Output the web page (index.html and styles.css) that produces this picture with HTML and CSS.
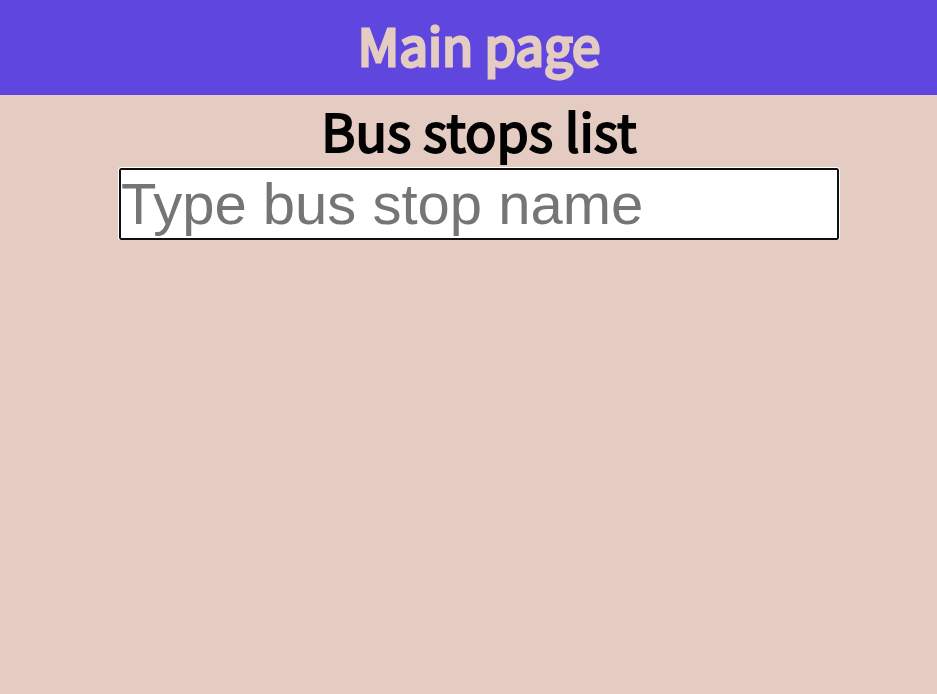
FILE: index.html
```html
<!DOCTYPE html>
<html lang="en">
<head>
<meta charset="utf-8">
<title>Main page</title>
<link rel="stylesheet" href="styles.css">
</head>
<body>
<header class="header"><h1 class="title">Main page</h1></header>
<main class="content">
<h2 class="subtitle"><label for="stop">Bus stops list</label></h2>
<input class="search" id="stop" type="text" placeholder="Type bus stop name">
</main>
</body>
</html>
```
FILE: styles.css
```css
body {
  margin: 0;
  background: #e5ccc3;
  color: #020202;
  font-family: "Noto Sans CJK SC", sans-serif;
}

.header {
  padding: 10px 0 16px 21px;
  background: #5f46df;
  color: #e5ccc3;
  text-align: center;
}

.title,
.subtitle {
  margin: 0;
  font-size: 51px;
  font-weight: 400;
  line-height: 69px;
  -webkit-text-stroke: 3px currentColor;
}

.subtitle {
  font-size: 52px;
  -webkit-text-stroke-width: 2px;
}

.content {
  display: flex;
  flex-direction: column;
  align-items: center;
  gap: 4px;
  padding-left: 21px;
}

.search {
  box-sizing: border-box;
  width: 100%;
  max-width: 720px;
  height: 72px;
  padding: 0 0 2px;
  border: 2px solid #101010;
  border-radius: 2px;
  outline: 1px solid #fff;
  background: #fff;
  font: 58px "Liberation Sans", Arial, sans-serif;
}

.search::placeholder {
  color: #757575;
}
```
